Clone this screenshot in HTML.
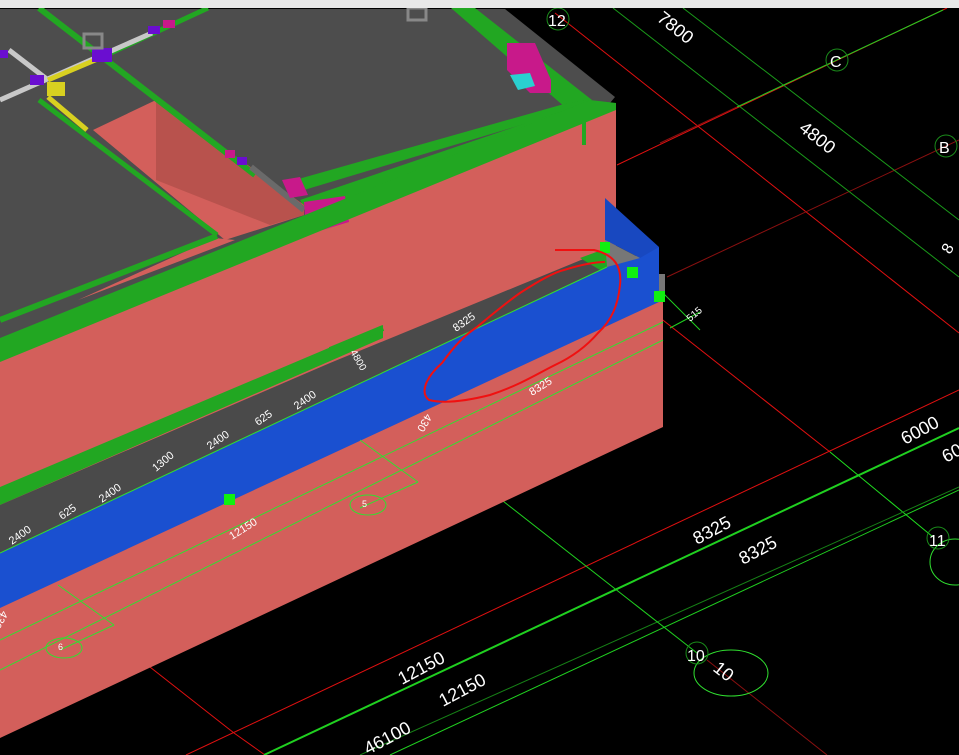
<!DOCTYPE html>
<html><head><meta charset="utf-8"><style>
html,body{margin:0;padding:0;background:#000;}
svg{display:block}
text{font-family:"Liberation Sans",sans-serif;fill:#fff}
</style></head><body>
<svg width="959" height="755" viewBox="0 0 959 755" xmlns="http://www.w3.org/2000/svg">
<rect width="959" height="755" fill="#000"/>
<!-- black area lines -->
<g fill="none" stroke-width="1">
<line x1="555" y1="13" x2="959" y2="333" stroke="#e01010"/>
<line x1="617" y1="165" x2="947" y2="8" stroke="#e01010"/>
<line x1="667" y1="277" x2="959" y2="140" stroke="#8a1010"/>
<line x1="640" y1="302" x2="830" y2="452" stroke="#e01010"/>
<line x1="186" y1="755" x2="959" y2="390" stroke="#e01010"/>
<line x1="48" y1="587" x2="234" y2="733" stroke="#e01010"/>
<line x1="234" y1="733" x2="265" y2="755" stroke="#e01010"/>
<line x1="707" y1="660" x2="827" y2="755" stroke="#8a1010"/>
<line x1="830" y1="452" x2="933" y2="537" stroke="#20e020"/>
<line x1="613" y1="8" x2="959" y2="277" stroke="#1a9a1a"/>
<line x1="683" y1="8" x2="959" y2="220" stroke="#1a9a1a"/>
<line x1="737" y1="107" x2="943" y2="10" stroke="#20d020"/>
<line x1="660" y1="143" x2="737" y2="107" stroke="#8a1010"/>
<line x1="264" y1="755" x2="959" y2="428" stroke="#20d020" stroke-width="2"/>
<line x1="360" y1="755" x2="959" y2="487" stroke="#168016"/>
<line x1="390" y1="755" x2="959" y2="490" stroke="#20d020"/>
<line x1="434" y1="447" x2="697" y2="653" stroke="#20d020"/>
<line x1="660" y1="290" x2="700" y2="330" stroke="#20d020"/>
<line x1="670" y1="328" x2="700" y2="312" stroke="#20d020"/>
</g>
<!-- pink block -->
<polygon points="0,335 616,103 616,262 663,282 663,427 0,738" fill="#d35f5b"/>
<!-- slab -->
<polygon points="0,9 505,9 615,97 610,103 0,340" fill="#4d4d4d"/>
<polygon points="451,8 475,8 592,100 566,108" fill="#22a722"/>
<polygon points="564,104 586,100 586,145 582,145 582,112" fill="#22a722"/>
<polygon points="295,180 564,104 581,107 304,190" fill="#22a722"/>
<polygon points="300,200 585,103 600,110 310,220" fill="#22a722"/>
<!-- pink opening -->
<polygon points="156,100 304,205 304,215 225,240 93,130" fill="#d35f5b"/>
<polygon points="156,100 304,205 304,215 270,225 156,180" fill="#b8524d"/>
<polygon points="78,300 215,238 235,240" fill="#d35f5b"/>
<line x1="39" y1="100" x2="217" y2="235" stroke="#22a722" stroke-width="5"/>
<line x1="39" y1="8" x2="255" y2="175" stroke="#22a722" stroke-width="6"/>
<line x1="208" y1="8" x2="100" y2="58" stroke="#22a722" stroke-width="5"/>
<line x1="0" y1="320" x2="217" y2="236" stroke="#22a722" stroke-width="6"/>
<line x1="251" y1="167" x2="304" y2="210" stroke="#6a6a6a" stroke-width="6"/>
<!-- top-left details -->
<line x1="0" y1="100" x2="152" y2="33" stroke="#c8c8c8" stroke-width="5"/>
<line x1="9" y1="50" x2="48" y2="80" stroke="#c8c8c8" stroke-width="5"/>
<line x1="48" y1="80" x2="100" y2="58" stroke="#d8d020" stroke-width="5"/>
<line x1="48" y1="97" x2="87" y2="130" stroke="#d8d020" stroke-width="5"/>
<rect x="47" y="82" width="18" height="14" fill="#d8d020"/>
<rect x="30" y="75" width="14" height="10" fill="#6a0ed0"/>
<rect x="92" y="48" width="20" height="14" fill="#6a0ed0"/>
<rect x="148" y="26" width="12" height="8" fill="#6a0ed0"/>
<rect x="0" y="50" width="8" height="8" fill="#6a0ed0"/>
<rect x="84" y="34" width="18" height="14" fill="none" stroke="#888" stroke-width="3"/>
<rect x="408" y="8" width="18" height="12" fill="none" stroke="#888" stroke-width="3"/>
<rect x="163" y="20" width="12" height="8" fill="#c8198a"/>
<rect x="225" y="150" width="10" height="8" fill="#c8198a"/>
<rect x="237" y="157" width="10" height="8" fill="#6a0ed0"/>
<polygon points="507,43 535,43 551,80 551,93 530,93 507,70" fill="#c8198a"/>
<polygon points="510,75 530,73 535,86 518,90" fill="#2ad0d0"/>
<polygon points="282,180 300,177 308,195 290,198" fill="#c8198a"/>
<polygon points="304,202 345,196 349,222 306,235" fill="#c8198a"/>
<!-- front green bands -->
<polygon points="0,338 590,100 616,103 616,110 0,362" fill="#22a722"/>
<!-- gray ledge + green lower band -->
<polygon points="0,487 383,325 383,338 0,505" fill="#22a722"/>
<polygon points="0,505 330,363 598,253 607,267 0,553" fill="#4a4a4a"/>
<line x1="330" y1="350" x2="383" y2="328" stroke="#22a722" stroke-width="6"/>
<polygon points="580,258 610,247 630,260 600,270" fill="#22a722"/>
<!-- blue beam -->
<polygon points="0,553 607,267 659,247 659,302 0,608" fill="#1a50d0"/>
<polygon points="605,198 659,247 640,258 605,240" fill="#1848c0"/>
<polygon points="605,240 640,258 607,267" fill="#777"/>
<line x1="0" y1="553" x2="607" y2="267" stroke="#30e030" stroke-width="1"/>
<rect x="659" y="274" width="6" height="22" fill="#777"/>
<!-- green squares -->
<rect x="600" y="242" width="10" height="11" fill="#10f010"/>
<rect x="627" y="267" width="11" height="11" fill="#10f010"/>
<rect x="654" y="291" width="11" height="11" fill="#10f010"/>
<rect x="224" y="494" width="11" height="11" fill="#10f010"/>
<!-- pink annotations -->
<g fill="none" stroke="#30e030" stroke-width="1">
<line x1="0" y1="640" x2="663" y2="322"/>
<line x1="0" y1="670" x2="663" y2="340"/>
<line x1="360" y1="440" x2="418" y2="482"/>
<line x1="418" y1="482" x2="360" y2="508"/>
<line x1="58" y1="585" x2="114" y2="625"/>
<line x1="114" y1="625" x2="60" y2="650"/>
<ellipse cx="368" cy="505" rx="18" ry="10"/>
<ellipse cx="64" cy="648" rx="18" ry="10"/>
<ellipse cx="731" cy="673" rx="37" ry="23"/>
<ellipse cx="955" cy="562" rx="25" ry="23"/>
<circle cx="697" cy="653" r="11" stroke="#1a8a1a"/>
<circle cx="938" cy="538" r="11" stroke="#1a8a1a"/>
<circle cx="558" cy="19" r="11" stroke="#1a8a1a"/>
<circle cx="837" cy="60" r="11" stroke="#1a8a1a"/>
<circle cx="946" cy="146" r="11" stroke="#1a8a1a"/>
</g>
<!-- handwritten red -->
<path d="M555,250 L594,250 C615,255 622,267 620,285 C618,305 612,320 598,333 C585,348 570,358 555,365 C535,375 520,385 490,395 C470,400 445,404 429,400 C420,393 425,378 442,363 C455,345 465,335 477,327 C495,312 510,300 520,293 C540,280 555,272 564,270 C580,265 595,262 605,262" fill="none" stroke="#f01010" stroke-width="2"/>
<!-- labels -->
<g font-size="11">
<text transform="translate(456,332) rotate(-35)">8325</text>
<text transform="translate(350,352) rotate(60)" font-size="10">4800</text>
<text transform="translate(297,410) rotate(-35)">2400</text>
<text transform="translate(258,426) rotate(-35)">625</text>
<text transform="translate(210,450) rotate(-35)">2400</text>
<text transform="translate(156,472) rotate(-40)">1300</text>
<text transform="translate(102,503) rotate(-35)">2400</text>
<text transform="translate(62,520) rotate(-35)">625</text>
<text transform="translate(12,545) rotate(-35)">2400</text>
<text transform="translate(532,396) rotate(-32)">8325</text>
<text transform="translate(232,540) rotate(-32)">12150</text>
<text transform="translate(426,413) rotate(120)">430</text>
<text transform="translate(2,610) rotate(120)">430</text>
<text transform="translate(690,322) rotate(-40)" font-size="10">515</text>
<text x="362" y="507" font-size="9">5</text>
<text x="58" y="650" font-size="9">6</text>
</g>
<g font-size="18">
<text transform="translate(402,685) rotate(-28)">12150</text>
<text transform="translate(443,707) rotate(-28)">12150</text>
<text transform="translate(368,755) rotate(-28)">46100</text>
<text transform="translate(697,545) rotate(-28)">8325</text>
<text transform="translate(743,565) rotate(-28)">8325</text>
<text transform="translate(905,445) rotate(-28)">6000</text>
<text transform="translate(946,463) rotate(-28)">60</text>
<text transform="translate(656,20) rotate(38)">7800</text>
<text transform="translate(798,130) rotate(38)">4800</text>
<text transform="translate(712,670) rotate(38)">10</text>
<text transform="translate(950,255) rotate(-60)" font-size="16">8</text>
</g>
<g font-size="16">
<text x="548" y="26">12</text>
<text x="830" y="67">C</text>
<text x="939" y="153">B</text>
<text x="687" y="661">10</text>
<text x="929" y="546">11</text>
</g>
<!-- top strip -->
<rect x="0" y="0" width="959" height="8" fill="#e8e8e8"/>
</svg>
</body></html>
